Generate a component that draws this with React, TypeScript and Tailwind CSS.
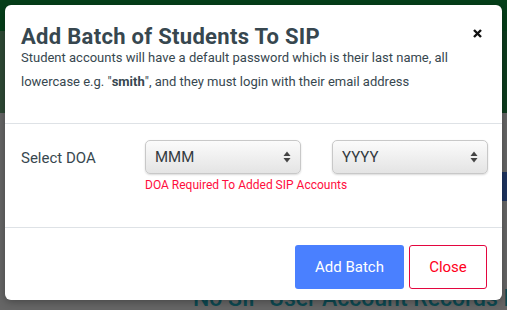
import React from "react";

function Arrows() {
  return (
    <svg width="8" height="12" viewBox="0 0 8 12" className="shrink-0">
      <path d="M4 0.5 L7.5 5 L0.5 5 Z" fill="#444" />
      <path d="M4 11.5 L7.5 7 L0.5 7 Z" fill="#444" />
    </svg>
  );
}

function Select({ label, w }: { label: string; w: string }) {
  return (
    <div
      className={`${w} h-[34px] flex items-center justify-between pl-[9px] pr-[9px] rounded-[5px] border border-[#c8c8c8] bg-gradient-to-b from-[#fbfbfb] to-[#e4e4e4] shadow-[0_1px_2px_rgba(0,0,0,0.15)] text-[15px] text-[#333a40]`}
    >
      <span>{label}</span>
      <Arrows />
    </div>
  );
}

export default function App() {
  return (
    <div
      className="relative w-[507px] h-[310px] overflow-hidden bg-[#666666]"
      style={{ fontFamily: "Roboto, 'Liberation Sans', sans-serif" }}
    >
      {/* background page (dimmed) */}
      <div className="flex flex-col h-full">
        <div className="h-[32px] bg-[#053f19]" />
        <div className="h-[83px] flex">
          <div className="flex-1 bg-[#2e4a35]" />
          <div className="w-[150px] bg-[#0d3c1e]" />
        </div>
        <div className="h-[60px]" />
        <div className="h-[30px] flex">
          <div className="flex-1" />
          <div className="w-[150px] bg-[#1e3460]" />
        </div>
        <div className="flex-1 pl-[193px] pt-[86px]">
          <div className="text-[23px] leading-none text-[#0d4a52] font-medium whitespace-nowrap">
            No SIP User Account Records Found
          </div>
        </div>
      </div>

      {/* modal */}
      <div className="absolute left-[5px] top-[5px] w-[497px] h-[295px] bg-white rounded-[6px] flex flex-col shadow-[0_2px_8px_rgba(0,0,0,0.3)]">
        <div className="relative h-[119px] border-b border-[#dee2e6] pl-[16px] pr-[30px] pt-[21px]">
          <h1 className="text-[22px] leading-[22px] font-bold tracking-[0.3px] text-[#37474f]">
            Add Batch of Students To SIP
          </h1>
          <p className="mt-[-2px] text-[13px] leading-[24px] text-[#37474f]">
            Student accounts will have a default password which is their last name, all lowercase e.g. "
            <b>smith</b>", and they must login with their email address
          </p>
          <svg
            className="absolute left-[468px] top-[24px]"
            width="9"
            height="9"
            viewBox="0 0 9 9"
          >
            <path d="M1 1 L8 8 M8 1 L1 8" stroke="#111" strokeWidth="2.4" />
          </svg>
        </div>
        <div className="h-[104px] border-b border-[#dee2e6] pl-[16px] pt-[16px] flex">
          <div className="w-[124px] pt-[8px] text-[15px] text-[#37474f] leading-[20px]">Select DOA</div>
          <div className="flex flex-col">
            <div className="flex gap-[31px]">
              <Select label="MMM" w="w-[156px]" />
              <Select label="YYYY" w="w-[156px]" />
            </div>
            <div className="mt-[3px] text-[12px] leading-[16px] text-[#ff0d3d]">
              DOA Required To Added SIP Accounts
            </div>
          </div>
        </div>
        <div className="flex-1 flex items-start justify-end gap-[5px] pr-[15px] pt-[17px]">
          <button className="w-[109px] h-[44px] rounded-[3px] bg-[#4a80ff] text-white text-[15px]">
            Add Batch
          </button>
          <button className="w-[78px] h-[44px] rounded-[3px] border border-[#e3063f] bg-white text-[#ff0020] text-[15px]">
            Close
          </button>
        </div>
      </div>
    </div>
  );
}
